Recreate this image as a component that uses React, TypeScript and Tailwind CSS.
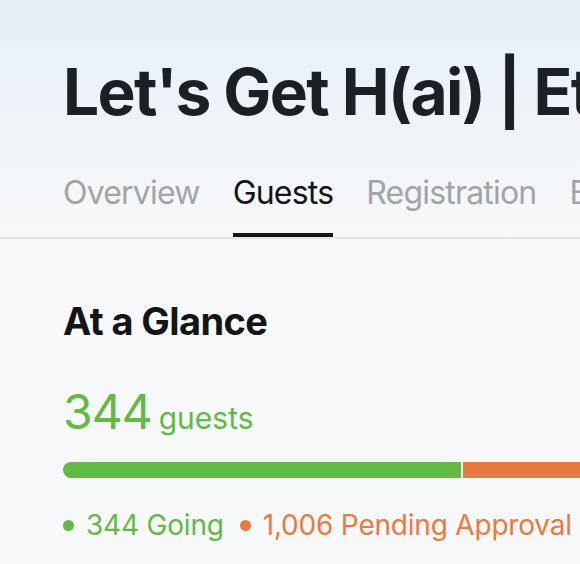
import React from 'react';

const tabs = ['Overview', 'Guests', 'Registration', 'Blasts', 'Insights', 'More'];

const App = () => {
    const going = 344;
    const pending = 1006;

    return (
        <div
            className="min-h-screen w-[580px] overflow-hidden bg-[#f7f8fa] text-[#1b2024]"
            style={{ fontFamily: 'Inter, "Noto Sans", sans-serif' }}
        >
            {/* Header */}
            <div className="bg-gradient-to-b from-[#e6eff6] to-[#f7f8fa] border-b-2 border-[#e4e6e8]">
                <div className="pl-[63px] pt-[54px]">
                    <h1 className="text-[64px] leading-[76px] font-bold tracking-[-1.6px] whitespace-nowrap">
                        Let's Get H(ai) | Ethereum Denver Hackathon
                    </h1>
                    <div className="flex gap-[33px] mt-[43px] whitespace-nowrap">
                        {tabs.map((t) => (
                            <div
                                key={t}
                                className={`text-[32px] leading-[40px] tracking-[-0.8px] pb-[20px] border-b-4 ${
                                    t === 'Guests' ? 'text-[#131517] border-[#131517]' : 'text-[#a3a4a6] border-transparent'
                                }`}
                            >
                                {t}
                            </div>
                        ))}
                    </div>
                </div>
            </div>

            {/* At a Glance */}
            <div className="pl-[63px] pt-[60px]">
                <h2 className="text-[38px] leading-[44px] font-bold tracking-[-0.6px] text-[#131517]">At a Glance</h2>
                <div className="mt-[41px] flex items-baseline gap-[7px] text-[#62b946] whitespace-nowrap">
                    <span className="text-[48px] leading-[56px] tracking-[-1px]">{going}</span>
                    <span className="text-[30px] leading-[36px]">guests</span>
                </div>
                <div className="mt-[22px] flex h-[16px] w-[700px] gap-[2px]">
                    <div className="h-full w-[398px] rounded-l-full bg-[#62b946]" />
                    <div className="h-full flex-1 bg-[#e77a3e]" />
                </div>
                <div className="mt-[30px] flex items-center gap-[16px] text-[28px] leading-[34px] tracking-[-0.2px] whitespace-nowrap">
                    <div className="flex items-center gap-[12px] text-[#62b946]">
                        <span className="h-[11px] w-[11px] rounded-full bg-[#62b946]" />
                        {going} Going
                    </div>
                    <div className="flex items-center gap-[12px] text-[#e77a3e]">
                        <span className="h-[11px] w-[11px] rounded-full bg-[#e77a3e]" />
                        {pending.toLocaleString('en-US')} Pending Approval
                    </div>
                </div>
            </div>
        </div>
    );
};

export default App;
